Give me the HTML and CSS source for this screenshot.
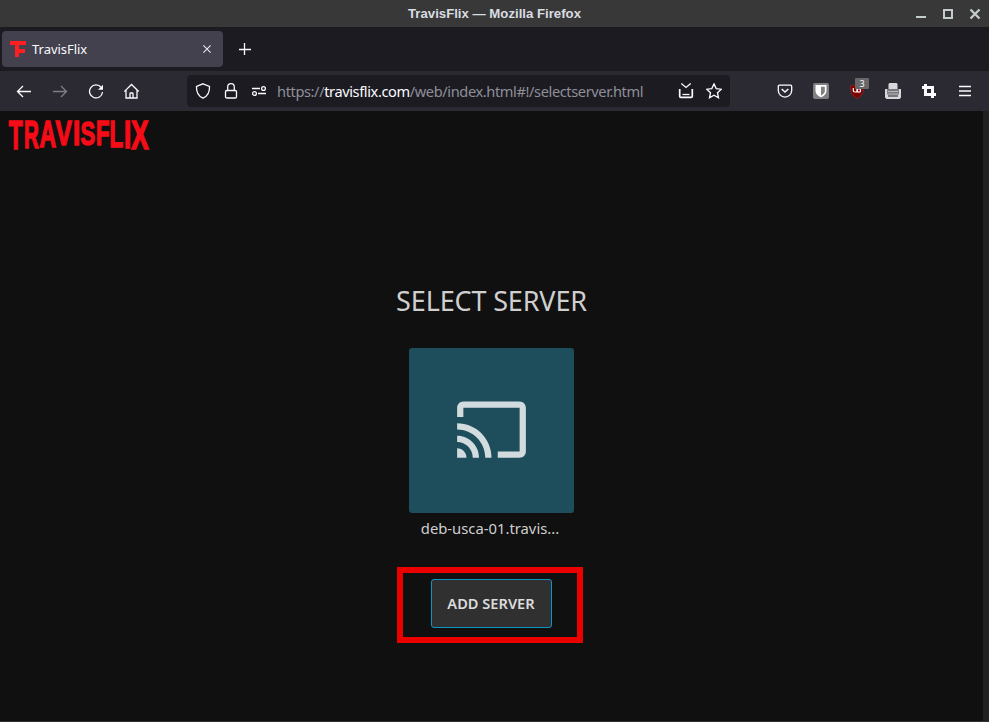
FILE: index.html
```html
<!DOCTYPE html>
<html lang="en">
<head>
<meta charset="utf-8">
<title>TravisFlix</title>
<link rel="stylesheet" href="styles.css">
</head>
<body>
<header class="titlebar">
  <span class="window-title">TravisFlix — Mozilla Firefox</span>
  <svg class="window-buttons" width="66" height="14" viewBox="0 0 66 14" fill="none" stroke="#c3cdce" stroke-width="2"><path d="M0 10h10M28 3h8v8h-8z"/><path d="M54.500 2.500l9 9m0-9l-9 9" stroke-width="2.300"/></svg>
</header>
<nav class="tabs">
  <div class="tab">
    <svg width="16" height="16" viewBox="0 0 16 16" fill="#ff1f22"><path d="M0 0h16v4H9v4h6v4H9v4H5V4H0z"/></svg>
    <span class="tab-name">TravisFlix</span>
    <svg class="tab-close" width="8" height="8" viewBox="0 0 8 8" stroke="#e8e8ee" stroke-width="1.1"><path d="M.4.4l7.2 7.2m0-7.2L.4 7.6"/></svg>
  </div>
  <svg class="new-tab" width="12" height="12" viewBox="0 0 12 12" stroke="#fbfbfe" stroke-width="1.3"><path d="M5.500 0v12M0 6.500h12"/></svg>
</nav>
<div class="toolbar">
  <div class="nav-buttons">
    <svg viewBox="0 0 16 16"><path d="M15 8.500H1.500M7 3L1.500 8.500 7 14"/></svg>
    <svg class="dim" viewBox="0 0 16 16"><path d="M1 8.500h13.500M9 3L14.500 8.500 9 14"/></svg>
    <svg viewBox="0 0 16 16"><path d="M13.200 4.500A6.500 6.500 0 1 0 14.500 9"/><path d="M15 1.800v5H10z" fill="#fbfbfe" stroke="none"/></svg>
    <svg viewBox="0 0 16 16"><path d="M.3 8.500L7.500 1.500 14.700 8.500M2 7.500V15h11V7.500M6 15v-4.300q0-.7.700-.7h1.600q.7 0 .7.700V15"/></svg>
  </div>
  <div class="urlbar">
    <svg viewBox="0 0 16 16"><path d="M8 .8l6.500 2.600c.3 5-1.300 9.500-6.500 11.800C2.800 12.900 1.200 8.400 1.500 3.400z"/></svg>
    <svg viewBox="0 0 16 16"><rect x="2.500" y="7.500" width="11" height="7.500" rx="1.300"/><path d="M4.700 7.500V4a3.300 3.300 0 0 1 6.600 0v3.500"/></svg>
    <svg viewBox="0 0 16 16"><path d="M1 5.500h8M7 10.500h8"/><circle cx="12.500" cy="5.500" r="1.900"/><circle cx="3.500" cy="10.500" r="1.900"/></svg>
    <span class="url">https://<b>travisflix.com</b>/web/index.html#!/selectserver.html</span>
    <svg class="save" viewBox="0 0 16 16"><path d="M3.300.5L8 4.500 12.700.5"/><path d="M1.700 6v7.200q0 1.100 1.100 1.100h10.400q1.100 0 1.100-1.100V6" stroke-width="1.700"/><path d="M4.500 11.500h7"/></svg>
    <svg viewBox="0 0 16 16"><path d="M8 .9l2.200 4.700 5.100.6-3.800 3.500 1 5.100L8 12.300l-4.500 2.500 1-5.100L.7 6.200l5.100-.6z"/></svg>
  </div>
  <div class="extensions">
    <svg viewBox="0 0 16 16"><path d="M2.500 2.200h11q1.200 0 1.200 1.200v4A6.700 6.700 0 0 1 1.300 7.400v-4q0-1.200 1.200-1.200z"/><path d="M4.700 6L8 9l3.300-3" stroke-width="1.500"/></svg>
    <svg viewBox="0 0 16 16"><rect width="16" height="16" rx="2" fill="#808080" stroke="none"/><path d="M2.500 2h11v6c0 3-2.500 5-5.500 6.300C5 13 2.500 11 2.500 8z" fill="#fff" stroke="none"/><path d="M8 3.700h3.800V8c0 2-1.600 3.400-3.800 4.500z" fill="#808080" stroke="none"/></svg>
    <div class="blocker">
      <svg viewBox="0 0 16 16"><path d="M8 .7c2 1.500 4 2 6.500 2 0 6-.5 9.500-6.500 12.800C2 12.200 1.500 8.700 1.500 2.700 4 2.700 6 2.200 8 .7z" fill="#800000" stroke="#a3343b" stroke-width=".5"/><path d="M4.300 5v2.500q0 1.500 1.500 1.500H8V5" stroke-width="1.200"/><circle cx="9.900" cy="7.400" r="1.700" stroke-width="1.200"/></svg>
      <span class="badge">3</span>
    </div>
    <svg viewBox="0 0 16 16"><path d="M4.500 0h7l1 1v5h-9V1zM0 6h2.500v5.500h11V6H16v8.500L14.500 16h-13L0 14.500z" fill="#d8d8dc" stroke="none"/><path d="M3 6h10v8H3z" fill="#77777c" stroke="none"/><path d="M3 8.500h10M3 11h10" stroke="#b8b8bd" stroke-width="1"/></svg>
    <svg viewBox="0 0 16 16"><path d="M4.500 1v10.500H15M1 4.500h10.500V15" stroke-width="3"/></svg>
    <svg viewBox="0 0 16 16"><path d="M2 3.500h12M2 8h12M2 12.500h12"/></svg>
  </div>
</div>
<div class="viewport">
  <main class="page">
    <svg class="logo" width="180" height="60" viewBox="0 111 180 60">
      <text transform="matrix(.63 0 0 1.11 8.800 149)">T</text><text transform="matrix(.57 0 0 1.07 23.900 147.800)">R</text><text transform="matrix(.64 0 0 1.03 39.600 146.500)">A</text><text transform="matrix(.68 0 0 .98 55.400 145.300)">V</text><text transform="matrix(.72 0 0 .98 73 145)">I</text><text transform="matrix(.61 0 0 .94 80.500 144.600)">S</text><text transform="matrix(.61 0 0 .99 96.100 145.300)">F</text><text transform="matrix(.62 0 0 1.03 109.600 146.500)">L</text><text transform="matrix(.72 0 0 1.07 124.100 147.700)">I</text><text transform="matrix(.72 0 0 1.12 131.300 149.300)">X</text>
    </svg>
    <section class="select">
      <h1>SELECT SERVER</h1>
      <div class="card">
        <svg width="75" height="75" viewBox="0 0 24 24" fill="#d2dbde"><path d="M21 3H3c-1.100 0-2 .9-2 2v3h2V5h18v14h-7v2h7c1.100 0 2-.9 2-2V5c0-1.100-.9-2-2-2zM1 18v3h3c0-1.660-1.340-3-3-3zm0-4v2c2.760 0 5 2.240 5 5h2c0-3.870-3.130-7-7-7zm0-4v2c4.970 0 9 4.030 9 9h2c0-6.080-4.930-11-11-11z"/></svg>
      </div>
      <div class="server-name">deb-usca-01.travis...</div>
      <div class="highlight"><button class="add">ADD SERVER</button></div>
    </section>
  </main>
  <div class="scrollbar"></div>
</div>
</body>
</html>
```
FILE: styles.css
```css
* { box-sizing: border-box; }
body { margin: 0; height: 722px; display: flex; flex-direction: column; overflow: hidden; background: #101010; color: #fbfbfe; font-family: "Noto Sans", "Open Sans", sans-serif; }
svg { display: block; flex: none; }
.titlebar { height: 27px; background: #383838; display: grid; grid-template-columns: 1fr auto 1fr; align-items: center; }
.window-title { grid-column: 2; font: bold 13.2px "Liberation Sans", sans-serif; color: #d9dde0; }
.window-buttons { justify-self: end; margin-right: 7px; }
.tabs { height: 44px; background: #1c1b22; display: flex; align-items: center; padding-left: 2px; }
.tab { width: 221px; height: 36px; border-radius: 4px; background: #42414d; display: flex; align-items: center; padding: 0 12px 0 8px; }
.tab-name { font-size: 13px; margin-left: 6px; letter-spacing: -.03px; }
.tab-close { margin-left: auto; }
.new-tab { margin-left: 16px; }
.toolbar { height: 40px; background: #2b2a33; display: flex; align-items: center; }
.toolbar svg { width: 16px; height: 16px; fill: none; stroke: #fbfbfe; stroke-width: 1.3; }
.nav-buttons { display: flex; gap: 20px; padding-left: 16px; width: 187px; }
.nav-buttons .dim { opacity: .4; }
.urlbar { width: 543px; height: 32px; border-radius: 4px; background: #1c1b22; display: flex; align-items: center; gap: 12px; padding: 0 8px; }
.url { font-size: 14.6px; color: #8f8f98; letter-spacing: -.39px; white-space: nowrap; margin-left: -2px; }
.url b { font-weight: 400; color: #fbfbfe; }
.urlbar .save { margin-left: auto; }
.extensions { margin-left: auto; display: flex; gap: 20px; padding-right: 16px; }
.blocker { position: relative; }
.badge { position: absolute; left: 6px; top: -5px; width: 14px; height: 11px; background: #686868; border-radius: 1px; font-size: 9px; line-height: 11px; text-align: center; }
.viewport { flex: 1; display: flex; border-bottom: 1px solid #303030; }
.page { flex: 1; }
.logo text { font: bold 36px "Liberation Sans", sans-serif; fill: #f60b17; stroke: #f60b17; stroke-width: 1.5px; }
.scrollbar { width: 6px; background: #202020; }
.select { display: flex; flex-direction: column; align-items: center; margin-top: 110px; color: #cfcfcf; }
h1 { font-size: 27px; font-weight: 400; line-height: 40px; letter-spacing: -.15px; margin: 0; }
.card { width: 165px; height: 165px; margin-top: 27px; padding-bottom: 2px; border-radius: 3px; background: #1e4d5c; display: grid; place-items: center; }
.server-name { font-size: 14.8px; line-height: 20px; margin-top: 5px; margin-left: -3px; }
.highlight { width: 186px; height: 76px; margin: 29px 4px 0 0; border: 6px solid #eb0000; display: flex; align-items: flex-start; padding: 6px 0 0 28px; }
.add { flex: none; width: 121px; height: 49px; padding: 0 0 2px; border: 1px solid #0d96c3; border-radius: 3px; background: #303030; color: #dcdcdc; font: 600 14.6px "Noto Sans", sans-serif; white-space: nowrap; }
```
